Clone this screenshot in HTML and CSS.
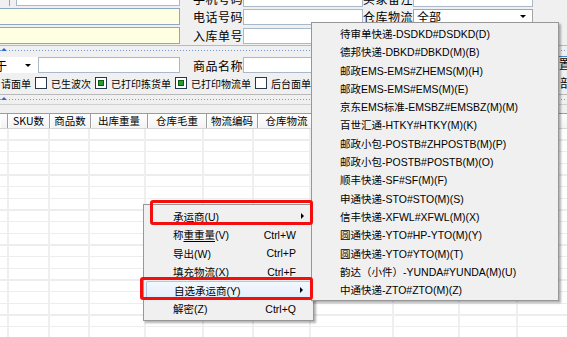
FILE: index.html
```html
<!DOCTYPE html>
<html lang="zh-CN">
<head>
<meta charset="UTF-8">
<meta name="viewport" content="width=device-width, initial-scale=1.0">
<title>出库单查询</title>
<link rel="stylesheet" href="styles.css">
</head>
<body>
<div class="page">

    <!-- 查询条件 -->
    <div class="top">
        <div class="first-left"><span class="stub"></span><span class="textbox"></span></div>
        <div class="label">手机号码</div>
        <div class="textbox"></div>
        <div class="label">买家备注</div>
        <div class="textbox"></div>

        <div class="memo"></div>
        <div class="label">电话号码</div>
        <div class="textbox"></div>
        <div class="label">仓库物流</div>
        <div class="select"><span>全部</span><span class="down"></span></div>

        <div class="memo"></div>
        <div class="label">入库单号</div>
        <div class="textbox"></div>
        <div class="label"></div>
        <div class="textbox"></div>
    </div>

    <div class="splitter first"><div class="dots"><span class="grip"></span></div></div>

    <div class="filter">
        <div class="combo"><span class="combo-text">于</span><span class="down"></span></div>
        <div class="textbox wide"></div>
        <div class="label">商品名称</div>
        <div class="textbox"></div>
        <div class="edge boxed">置</div>
    </div>

    <div class="checks">
        <span class="first-text">请面单</span>
        <span class="cb"></span><span>已生波次</span>
        <span class="cb on"></span><span>已打印拣货单</span>
        <span class="cb on"></span><span>已打印物流单</span>
        <span class="cb"></span><span>后台面单</span>
        <span class="edge">部</span>
    </div>

    <div class="splitter second"><div class="dots"><span class="grip"></span></div></div>

    <!-- 表格 -->
    <div class="grid-bar"></div>
    <div class="grid-head">
        <div></div>
        <div>SKU数</div>
        <div>商品数</div>
        <div>出库重量</div>
        <div>仓库毛重</div>
        <div>物流编码</div>
        <div>仓库物流</div>
        <div></div>
        <div></div>
        <div></div>
        <div></div>
    </div>
    <div class="grid-body">
        <div class="col c0"></div>
        <div class="col c1"></div>
        <div class="col c2"></div>
        <div class="col c3"></div>
        <div class="col c4"></div>
        <div class="col c5"></div>
        <div class="col c6"></div>
        <div class="col c7"></div>
        <div class="col c8"></div>
        <div class="col c9"></div>
        <div class="col c10"></div>
    </div>

    <!-- 右键菜单 -->
    <div class="ctx-menu">
        <div class="item"><span>承运商(U)</span><span class="more"></span></div>
        <div class="item"><span>称<u>重重量</u>(V)</span><span>Ctrl+W</span></div>
        <div class="item"><span>导出(W)</span><span>Ctrl+P</span></div>
        <div class="item"><span>填充物流(X)</span><span>Ctrl+F</span></div>
        <div class="item hot"><span>自选承运商(Y)</span><span class="more"></span></div>
        <div class="item"><span>解密(Z)</span><span>Ctrl+Q</span></div>
    </div>

    <!-- 子菜单 -->
    <div class="sub-menu">
        <div class="item">待审单快递-DSDKD#DSDKD(D)</div>
        <div class="item">德邦快递-DBKD#DBKD(M)(B)</div>
        <div class="item">邮政EMS-EMS#ZHEMS(M)(H)</div>
        <div class="item">邮政EMS-EMS#EMS(M)(E)</div>
        <div class="item">京东EMS标准-EMSBZ#EMSBZ(M)(M)</div>
        <div class="item">百世汇通-HTKY#HTKY(M)(K)</div>
        <div class="item">邮政小包-POSTB#ZHPOSTB(M)(P)</div>
        <div class="item">邮政小包-POSTB#POSTB(M)(O)</div>
        <div class="item">顺丰快递-SF#SF(M)(F)</div>
        <div class="item">申通快递-STO#STO(M)(S)</div>
        <div class="item">信丰快递-XFWL#XFWL(M)(X)</div>
        <div class="item">圆通快递-YTO#HP-YTO(M)(Y)</div>
        <div class="item">圆通快递-YTO#YTO(M)(T)</div>
        <div class="item">韵达（小件）-YUNDA#YUNDA(M)(U)</div>
        <div class="item">中通快递-ZTO#ZTO(M)(Z)</div>
    </div>

    <!-- 红框标注 -->
    <div class="mark mark-one"></div>
    <div class="mark mark-two"></div>
</div>
</body>
</html>
```

FILE: styles.css
```css
body {
    margin: 0;
    padding: 0;
    background-color: #f0f0f0;
    font-family: "Noto Sans CJK SC", sans-serif;
    font-size: 12px;
    color: #000;
}
.page {
    width: 567px;
    height: 337px;
    overflow: hidden;
    position: relative;
}
/* 查询条件 */
.top {
    display: grid;
    grid-template-columns: 180px 63px 120px 50px 120px;
    grid-template-rows: 15px 17px 17px;
    row-gap: 2px;
    margin-top: -9px;
}
.first-left {
    display: flex;
}
.stub {
    width: 9px;
    margin-right: 6px;
    border-right: 1px solid #a0a0a0;
}
.first-left .textbox {
    flex: 1;
}
.textbox {
    background-color: #fff;
    border: 1px solid #a9b9ca;
    box-sizing: border-box;
}
.top .textbox, .select {
    height: 16px;
    align-self: center;
}
.top .first-left .textbox {
    height: 15px;
}
.label {
    display: flex;
    align-items: center;
    justify-content: flex-end;
    letter-spacing: 0.5px;
    white-space: nowrap;
}
.memo {
    margin-left: -1px;
    background-color: #ffffe1;
    border: 1px solid #8ea6c2;
}
.select {
    display: flex;
    align-items: center;
    justify-content: space-between;
    padding: 0 6px 0 3px;
    background-color: #fff;
    border: 1px solid #a5a5a5;
    box-sizing: border-box;
}
.down {
    width: 0;
    height: 0;
    border-left: 3px solid transparent;
    border-right: 3px solid transparent;
    border-top: 3px solid #000;
}
/* 分隔条 */
.splitter {
    border-top: 1px solid #b9b9b9;
    padding-top: 2px;
    box-sizing: border-box;
}
.splitter.first {
    margin-top: 1px;
    height: 8px;
}
.splitter.second {
    margin-top: 3px;
    height: 6px;
}
.dots {
    display: flex;
    align-items: flex-end;
    height: 3px;
    background: repeating-linear-gradient(90deg, #6b9ad6 0 1px, transparent 1px 3px) 0 2px / 100% 1px no-repeat;
}
.grip {
    width: 0;
    height: 0;
    margin-left: 1px;
    border-left: 3px solid transparent;
    border-right: 3px solid transparent;
    border-bottom: 3px solid #2f6cc4;
    background-color: #f0f0f0;
}
.filter {
    display: flex;
    align-items: flex-start;
    height: 22px;
    padding-top: 4px;
    box-sizing: border-box;
}
.filter .textbox, .combo {
    height: 16px;
}
.combo {
    width: 38px;
    display: flex;
    align-items: center;
    justify-content: space-between;
    padding-right: 7px;
    box-sizing: border-box;
    background-color: #fff;
    overflow: hidden;
}
.combo-text {
    margin-left: -5px;
}
.filter .wide {
    width: 142px;
}
.filter .label {
    width: 63px;
    height: 16px;
}
.filter .textbox {
    flex: none;
}
.filter .textbox:not(.wide) {
    width: 120px;
}
.edge {
    margin-left: auto;
    width: 7px;
    overflow: hidden;
    white-space: nowrap;
    line-height: 14px;
}
.edge.boxed {
    width: 8px;
    margin-top: -1px;
    border-top: 1px solid #4a86c0;
}
/* 勾选项 */
.checks {
    display: flex;
    align-items: center;
    height: 16px;
    font-size: 10px;
    white-space: nowrap;
}
.first-text {
    margin-left: 1px;
}
.cb {
    width: 12px;
    height: 12px;
    margin: 0 4px;
    box-sizing: border-box;
    border: 1px solid #263650;
    background-color: #fff;
    display: flex;
    align-items: center;
    justify-content: center;
}
.cb.on::after {
    content: "";
    width: 6px;
    height: 6px;
    background-color: #1f9e2a;
    border: 1px solid #0d5a14;
    box-sizing: border-box;
}
.checks .edge {
    font-size: 12px;
}
/* 表格 */
.grid-bar {
    margin-top: 4px;
    height: 8px;
    border-top: 1px solid #d0d0d0;
}
.grid-head {
    display: grid;
    grid-template-columns: 8px 42px 41px 57px 59px 51px 58px 84px 67px 59px 60px;
    height: 16px;
    box-sizing: border-box;
    border-top: 1px solid #9c9c9c;
    border-bottom: 1px solid #d6d6d6;
}
.grid-head div {
    background: linear-gradient(#ffffff, #f3f3f3);
    border-right: 1px solid #9d9d9d;
    box-shadow: inset 1px 0 #fff;
    text-align: center;
    font-size: 10.5px;
    line-height: 14px;
    white-space: nowrap;
    overflow: hidden;
}
.grid-body {
    display: flex;
    height: 210px;
    background: repeating-linear-gradient(#fff 0 10.17px, #ededed 10.17px 11.67px);
}
.col {
    height: 100%;
    border-right: 2px solid #efefef;
    box-sizing: border-box;
    flex: none;
    margin-right: -1px;
}
.c0 { width: 9px; }
.c1 { width: 42px; }
.c2 { width: 41px; }
.c3 { width: 57px; }
.c4 { width: 59px; }
.c5 { width: 51px; }
.c6 { width: 58px; }
.c7 { width: 84px; }
.c8 { width: 67px; }
.c9 { width: 59px; }
.c10 { width: 60px; }
/* 右键菜单 */
.ctx-menu, .sub-menu {
    position: absolute;
    background-color: #f0f0f0;
    border: 1px solid #979797;
    box-sizing: border-box;
    box-shadow: 2px 2px 2px rgba(0, 0, 0, 0.3);
    font-family: "Liberation Sans", "Noto Sans CJK SC", sans-serif;
    font-size: 10.5px;
    white-space: nowrap;
}
.ctx-menu {
    left: 143px;
    top: 204px;
    width: 171px;
    height: 117px;
    padding: 2px 0;
}
.ctx-menu .item {
    height: 18.5px;
    display: flex;
    align-items: center;
    justify-content: space-between;
    padding: 0 17px 0 29px;
    box-sizing: border-box;
}
.ctx-menu .item u {
    text-decoration-thickness: 1px;
    text-underline-offset: 2px;
}
.ctx-menu .hot {
    margin: 0 2px;
    padding: 0 15px 0 27px;
    background: linear-gradient(#f3f8fe, #e2edfb);
    border: 1px solid #a9c8ee;
    border-radius: 2px;
}
.more {
    width: 0;
    height: 0;
    margin-right: -8px;
    border-top: 3px solid transparent;
    border-bottom: 3px solid transparent;
    border-left: 3px solid #000;
}
.sub-menu {
    left: 311px;
    top: 22px;
    width: 248px;
    height: 279px;
    padding: 2px 0;
}
.sub-menu .item {
    height: 18.3px;
    line-height: 18.3px;
    padding-left: 28px;
}
/* 红框 */
.mark {
    position: absolute;
    border: 3px solid #f40f0f;
    border-radius: 3px;
    box-sizing: border-box;
}
.mark-one {
    left: 150px;
    top: 200px;
    width: 163px;
    height: 25px;
}
.mark-two {
    left: 140px;
    top: 277px;
    width: 173px;
    height: 23px;
}
```
